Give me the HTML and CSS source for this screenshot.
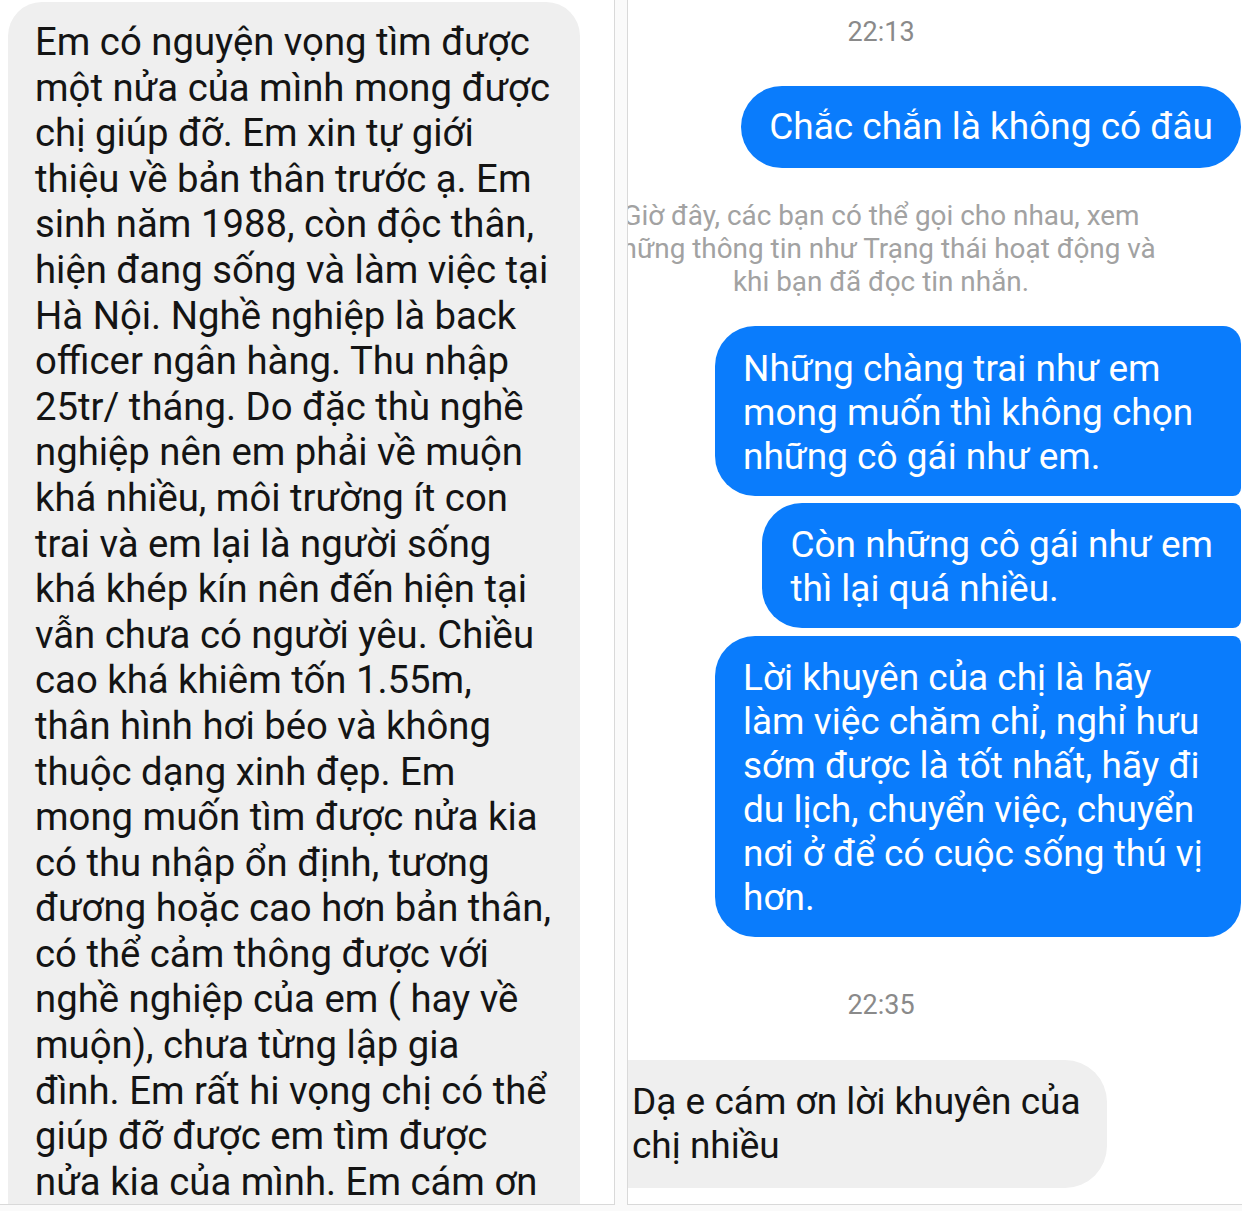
FILE: index.html
```html
<!DOCTYPE html>
<html lang="vi">
<head>
  <meta charset="UTF-8">
  <title>Tin nhắn</title>
  <link rel="stylesheet" href="styles.css">
</head>
<body>
  <div class="sheet">
    <!-- left: the long incoming message -->
    <section class="panel panel-left">
      <div class="letter">
        Em có nguyện vọng tìm được<br>
        một nửa của mình mong được<br>
        chị giúp đỡ. Em xin tự giới<br>
        thiệu về bản thân trước ạ. Em<br>
        sinh năm 1988, còn độc thân,<br>
        hiện đang sống và làm việc tại<br>
        Hà Nội. Nghề nghiệp là back<br>
        officer ngân hàng. Thu nhập<br>
        25tr/ tháng. Do đặc thù nghề<br>
        nghiệp nên em phải về muộn<br>
        khá nhiều, môi trường ít con<br>
        trai và em lại là người sống<br>
        khá khép kín nên đến hiện tại<br>
        vẫn chưa có người yêu. Chiều<br>
        cao khá khiêm tốn 1.55m,<br>
        thân hình hơi béo và không<br>
        thuộc dạng xinh đẹp. Em<br>
        mong muốn tìm được nửa kia<br>
        có thu nhập ổn định, tương<br>
        đương hoặc cao hơn bản thân,<br>
        có thể cảm thông được với<br>
        nghề nghiệp của em ( hay về<br>
        muộn), chưa từng lập gia<br>
        đình. Em rất hi vọng chị có thể<br>
        giúp đỡ được em tìm được<br>
        nửa kia của mình. Em cám ơn
      </div>
    </section>

    <!-- right: the conversation -->
    <section class="panel panel-right">
      <div class="stamp">22:13</div>
      <div class="msg sent single">Chắc chắn là không có đâu</div>
      <div class="note">
        Giờ đây, các bạn có thể gọi cho nhau, xem<br>
        những thông tin như Trạng thái hoạt động và<br>
        khi bạn đã đọc tin nhắn.
      </div>
      <div class="msg sent first full">Những chàng trai như em<br>mong muốn thì không chọn<br>những cô gái như em.</div>
      <div class="msg sent middle">Còn những cô gái như em<br>thì lại quá nhiều.</div>
      <div class="msg sent last full">Lời khuyên của chị là hãy<br>làm việc chăm chỉ, nghỉ hưu<br>sớm được là tốt nhất, hãy đi<br>du lịch, chuyển việc, chuyển<br>nơi ở để có cuộc sống thú vị<br>hơn.</div>
      <div class="stamp stamp-late">22:35</div>
      <div class="msg received">Dạ e cám ơn lời khuyên của<br>chị nhiều</div>
    </section>
  </div>
</body>
</html>
```

FILE: styles.css
```css
html, body {
  margin: 0;
  background: #fafafa;
}
body {
  font-family: Roboto, "Noto Sans", sans-serif;
  height: 1211px;
  overflow: hidden;
}
.sheet {
  display: flex;
  gap: 12px;
  height: 1205px;
}
.panel {
  background: #fff;
  overflow: hidden;
  border-bottom: 1px solid #d9d9d9;
}
.panel-left {
  width: 614px;
  border-right: 1px solid #d9d9d9;
}
.panel-right {
  flex: 1;
  border-left: 1px solid #d9d9d9;
  display: flex;
  flex-direction: column;
  align-items: flex-end;
  padding-right: 1px;
}

/* left letter bubble */
.letter {
  margin: 2px 0 0 8px;
  width: 545px;
  height: 1300px;
  padding: 17px 0 0 27px;
  background: #efefef;
  border-radius: 34px 34px 0 0;
  color: #141414;
  font-size: 38.3px;
  line-height: 45.6px;
  white-space: nowrap;
}

/* centred lines (timestamps, notices) sit on the phone's centre, not the panel's */
.stamp, .note {
  align-self: flex-start;
  margin-left: -117px;
  width: 740px;
  text-align: center;
  white-space: nowrap;
}
.stamp {
  margin-top: 17px;
  color: #8a8a8a;
  font-size: 27px;
  line-height: 30px;
}
.stamp-late {
  margin-top: 53px;
}
.note {
  margin-top: 31px;
  color: #a2a2a2;
  font-size: 27.9px;
  line-height: 33px;
}

.msg {
  font-size: 37px;
  line-height: 44px;
  padding: 19.5px 28px 17.5px;
  white-space: nowrap;
  box-sizing: border-box;
}
.sent {
  background: #0a7cfc;
  color: #fff;
}
.full {
  width: 526px;
}
.single {
  margin-top: 39px;
  padding: 19px 28px;
  border-radius: 42px;
}
.first {
  margin-top: 28px;
  padding: 21px 28px 17px;
  border-radius: 40px 18px 8px 40px;
}
.middle {
  margin-top: 7px;
  border-radius: 40px 8px 8px 40px;
}
.last {
  margin-top: 8px;
  border-radius: 40px 8px 34px 40px;
}
.received {
  align-self: flex-start;
  margin: 40px 0 0 -24px;
  padding: 20px 28px;
  width: 503px;
  background: #efefef;
  color: #141414;
  border-radius: 0 42px 42px 0;
}
```
